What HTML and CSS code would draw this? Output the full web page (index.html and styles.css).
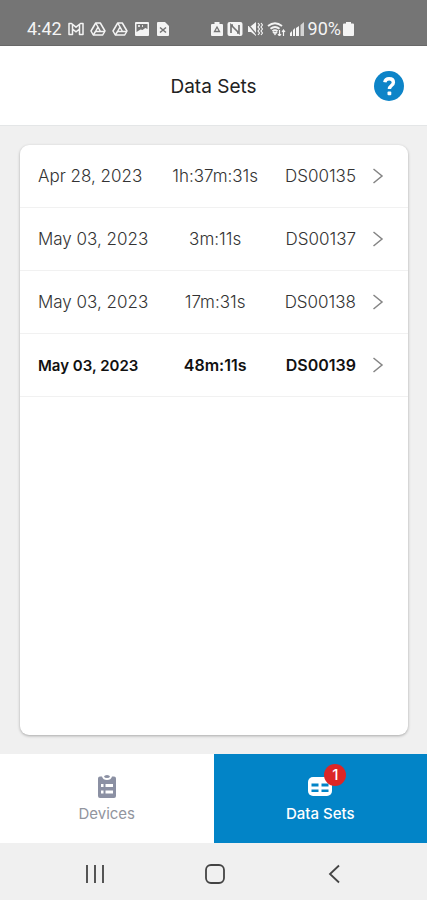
FILE: index.html
```html
<!DOCTYPE html>
<html lang="en">
<head>
<meta charset="utf-8">
<meta name="viewport" content="width=device-width, initial-scale=1">
<title>Data Sets</title>
<link rel="stylesheet" href="styles.css">
</head>
<body>
<div class="status">
  <div class="status-group">
    <span>4:42</span>
    <svg width="16" height="14" viewBox="0 0 16 14" fill="none" stroke="currentColor" stroke-width="1.500" stroke-linejoin="round"><path d="M1 1.500h2.500L8 5.200l4.500-3.700H15v11h-3.500V7L8 9.800 4.500 7v5.500H1zM4.500 7V2.500M11.500 7V2.500"/></svg>
    <svg width="16" height="14" viewBox="0 0 16 14" fill="none" stroke="currentColor" stroke-width="1.500" stroke-linejoin="round"><path d="M5.700 1h4.600l4.700 8-2.300 4H3.300L1 9z"/><path d="M8 5 5.500 9.500h5zM5.500 9.500 3.300 13M10.500 9.500H15M8 5 5.700 1"/></svg>
    <svg width="16" height="14" viewBox="0 0 16 14" fill="none" stroke="currentColor" stroke-width="1.500" stroke-linejoin="round"><path d="M5.700 1h4.600l4.700 8-2.300 4H3.300L1 9z"/><path d="M8 5 5.500 9.500h5zM5.500 9.500 3.300 13M10.500 9.500H15M8 5 5.700 1"/></svg>
    <svg width="16" height="14" viewBox="0 0 16 14"><rect x="1" width="14" height="14" rx="1" fill="currentColor"/><path d="M2.500 2h11v5l-2.200-1-2.800 2-2-.5-4 2.500z" fill="#757575"/><path d="M4 4h2M8 4h1" stroke="#fff" stroke-width="1.500"/></svg>
    <svg class="doc" width="14" height="14" viewBox="0 0 14 14"><path d="M2 0h7l4 4v9a1 1 0 0 1-1 1H2a1 1 0 0 1-1-1V1a1 1 0 0 1 1-1z" fill="currentColor"/><path d="m4 5.500 6 5M10 5.500l-6 5" stroke="#757575" stroke-width="1.600"/></svg>
  </div>
  <div class="status-group status-right">
    <svg width="12" height="14" viewBox="0 0 12 14"><path d="M3.500 0h5v2H11a1 1 0 0 1 1 1v10a1 1 0 0 1-1 1H1a1 1 0 0 1-1-1V3a1 1 0 0 1 1-1h2.500z" fill="currentColor"/><path d="m6 5 2.500 4.500h-5z" fill="none" stroke="#757575" stroke-width="1.300"/></svg>
    <svg width="16" height="14" viewBox="0 0 16 14"><rect x=".5" width="15" height="14" rx="2" fill="currentColor"/><path d="M4 11V3l8 8V3M4 3h2M10 11h2" fill="none" stroke="#757575" stroke-width="1.700"/></svg>
    <svg width="16" height="14" viewBox="0 0 16 14"><path d="M1 4h3l5-4v14l-5-4H1z" fill="currentColor"/><path d="M0 1l10 12" stroke="#757575" stroke-width="1.300"/><path d="m11 1 1.500 2L11 5l1.500 2L11 9l1.500 2L11 13M14 1l1.500 2L14 5l1.500 2L14 9l1.500 2-1.500 2" fill="none" stroke="currentColor" stroke-width="1.200"/></svg>
    <svg width="19" height="14" viewBox="0 0 19 14" fill="none" stroke="currentColor" stroke-width="1.900"><path d="M1 4q7-5.500 14 0M3.500 6.800q4.500-3.500 9 0M5.500 9.300q2.500-2 5 0"/><path d="m6.500 10.500 1.500 2 1.500-2zM12.500 8v6M11 12l1.500 2 1.500-2M16.500 14V8M15 10l1.500-2 1.500 2" stroke-width="1.200"/></svg>
    <svg width="14" height="14" viewBox="0 0 14 14" fill="currentColor"><path d="M0 14v-3l2-2v5zM3 14V8l2-2v8zM6 14V6l3-2v10z"/><path d="M10.500 14V3L14 0v14z" opacity=".75"/></svg>
    <span class="battery">90%<svg width="11" height="14" viewBox="0 0 11 14" fill="currentColor"><path d="M3 0h5v1.500h2a1 1 0 0 1 1 1V13a1 1 0 0 1-1 1H1a1 1 0 0 1-1-1V2.500a1 1 0 0 1 1-1h2z"/></svg></span>
  </div>
</div>

<header class="header">
  <h1>Data Sets</h1>
  <button class="help" type="button" aria-label="Help">
    <svg width="30" height="30" viewBox="0 0 30 30"><circle cx="15" cy="15" r="15" fill="#0d84c8"/><path d="M10.800 11.200c.4-2.200 2-3.400 4.300-3.400 2.600 0 4.300 1.400 4.300 3.600 0 3.200-4 3-4 6.600" fill="none" stroke="#fff" stroke-width="3.400"/><rect x="13.500" y="20.500" width="3.800" height="3.800" rx="1" fill="#fff"/></svg>
  </button>
</header>

<main class="content">
  <div class="card">
    <table class="sets">
      <tbody>
        <tr><td class="date">Apr 28, 2023</td><td class="time">1h:37m:31s</td><td class="id">DS00135</td><td class="go"><a href="#DS00135" aria-label="Open DS00135"><svg width="12" height="16" viewBox="0 0 12 16"><path d="m1.500 1 8.500 7-8.500 7"/></svg></a></td></tr>
        <tr><td class="date">May 03, 2023</td><td class="time">3m:11s</td><td class="id">DS00137</td><td class="go"><a href="#DS00137" aria-label="Open DS00137"><svg width="12" height="16" viewBox="0 0 12 16"><path d="m1.500 1 8.500 7-8.500 7"/></svg></a></td></tr>
        <tr><td class="date">May 03, 2023</td><td class="time">17m:31s</td><td class="id">DS00138</td><td class="go"><a href="#DS00138" aria-label="Open DS00138"><svg width="12" height="16" viewBox="0 0 12 16"><path d="m1.500 1 8.500 7-8.500 7"/></svg></a></td></tr>
        <tr class="unread"><td class="date">May 03, 2023</td><td class="time">48m:11s</td><td class="id">DS00139</td><td class="go"><a href="#DS00139" aria-label="Open DS00139"><svg width="12" height="16" viewBox="0 0 12 16"><path d="m1.500 1 8.500 7-8.500 7"/></svg></a></td></tr>
      </tbody>
    </table>
  </div>
</main>

<nav class="tabs">
  <a class="tab" href="#devices">
    <span class="tab-icon"><svg width="18" height="24" viewBox="0 0 18 24"><path d="M2 2.500h2Q5 6 9 6t5-3.500h2a2 2 0 0 1 2 2V22a2 2 0 0 1-2 2H2a2 2 0 0 1-2-2V4.500a2 2 0 0 1 2-2z" fill="#8b90a3"/><path d="M6 2.500Q6.500 1 9 1t3 1.500Q11.500 4 9 4T6 2.500z" fill="#8b90a3"/><path d="M3 10h2.500v3H3zM7.500 10H15v3H7.500zM3 16.500h2.500v3H3zM7.500 16.500H15v3H7.500z" fill="#fff"/></svg></span>
    <span>Devices</span>
  </a>
  <a class="tab active" href="#data-sets" aria-current="page">
    <span class="tab-icon"><svg width="24" height="19" viewBox="0 0 24 19"><rect width="24" height="19" rx="5" fill="#fff"/><path d="M3.500 6.500h7v3h-7zM13.500 6.500h7v3h-7zM3.500 12.500h7v2.500h-7zM13.500 12.500h7v2.500h-7z" fill="#0284c7"/></svg><span class="badge">1</span></span>
    <span>Data Sets</span>
  </a>
</nav>

<div class="system">
  <button type="button" aria-label="Recent apps"><svg width="20" height="20" viewBox="0 0 20 20"><path d="M2 1v18M10 1v18M18 1v18"/></svg></button>
  <button type="button" aria-label="Home"><svg width="20" height="20" viewBox="0 0 20 20"><rect x="1" y="1" width="18" height="18" rx="5"/></svg></button>
  <button type="button" aria-label="Back"><svg width="20" height="20" viewBox="0 0 20 20"><path d="m15 1.500-9 8.500 9 8.500"/></svg></button>
</div>
</body>
</html>
```
FILE: styles.css
```css
* { box-sizing: border-box; }

body {
  margin: 0;
  min-height: 100vh;
  display: flex;
  flex-direction: column;
  background: #f0f0f0;
  color: #333;
  font-family: Inter, "Liberation Sans", sans-serif;
  font-size: 17px;
}

svg { display: block; flex: none; }
a { color: inherit; text-decoration: none; }
button { border: 0; padding: 0; background: none; }

.status {
  display: flex;
  justify-content: space-between;
  align-items: center;
  height: 46px;
  padding: 12px 73px 0 27px;
  background: #757575;
  border-bottom: 1px solid #686868;
  color: #f4f4f4;
  font: 18px/20px Roboto, sans-serif;
}
.status-group { display: flex; align-items: center; gap: 6px; }
.status-right { gap: 4px; }
.battery { display: flex; align-items: center; gap: 2px; }

.header {
  display: grid;
  grid-template-columns: 1fr auto 1fr;
  align-items: center;
  height: 80px;
  padding: 1px 23px 0;
  background: #fff;
  border-bottom: 1px solid #e4e6e7;
}
.header h1 {
  grid-column: 2;
  margin: 0;
  color: #222;
  font-size: 19px;
  font-weight: 400;
}
.help { justify-self: end; }

.content {
  flex: 1;
  display: flex;
  padding: 19px 19px 19px 20px;
}
.card {
  flex: 1;
  overflow: hidden;
  background: #fff;
  border-radius: 9px;
  box-shadow: 0 1px 3px rgba(0, 0, 0, .3);
}

.sets {
  width: 100%;
  border-spacing: 0;
  table-layout: fixed;
}
.sets td {
  height: 63px;
  padding: 0;
  border-bottom: 1px solid #f1f1f1;
  font-weight: 300;
  white-space: nowrap;
}
.sets .date { width: 37%; padding-left: 18px; }
.sets .time { text-align: center; }
.sets .id { width: 23%; text-align: right; }
.sets .go { width: 52px; padding-left: 16px; }
.go path { fill: none; stroke: #858585; stroke-width: 1.500; }
.sets .unread td { color: #111; font-size: 16px; font-weight: 600; }
.sets .unread .date { font-size: 15px; }

.tabs { display: flex; height: 89px; }
.tab {
  flex: 1;
  display: flex;
  flex-direction: column;
  align-items: center;
  gap: 6px;
  padding-top: 20px;
  background: #fff;
  color: #92959e;
  font-size: 15px;
  line-height: 20px;
}
.tab.active { background: #0284c7; color: #fff; font-weight: 500; }
.tab-icon {
  position: relative;
  display: flex;
  align-items: center;
  height: 24px;
}
.badge {
  position: absolute;
  top: -10px;
  left: 16px;
  width: 22px;
  height: 22px;
  border-radius: 50%;
  background: #dc2626;
  color: #fff;
  text-align: center;
  line-height: 22px;
}

.system {
  display: flex;
  justify-content: space-between;
  align-items: center;
  height: 57px;
  padding: 4px 83px 0 85px;
}
.system svg { fill: none; stroke: #444; stroke-width: 1.800; }
```
